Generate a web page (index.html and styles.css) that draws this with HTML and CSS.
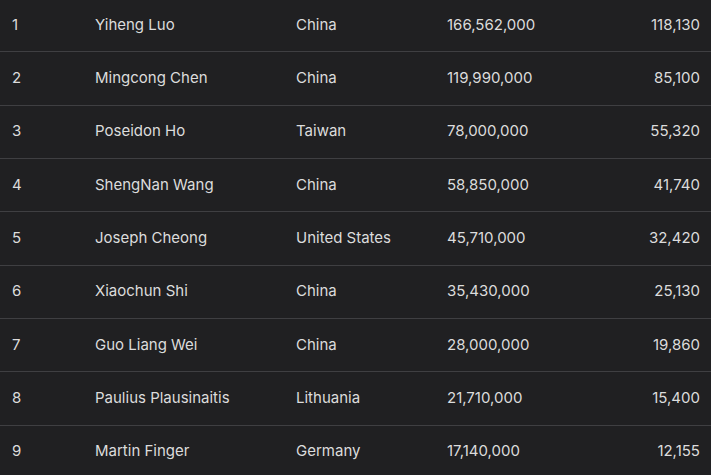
FILE: index.html
```html
<!DOCTYPE html>
<html>
<head>
<meta charset="utf-8">
<link rel="stylesheet" href="styles.css">
</head>
<body>
<div class="table">
  <div class="row"><span>1</span><span>Yiheng Luo</span><span>China</span><span>166,562,000</span><span class="num">118,130</span></div>
  <div class="row"><span>2</span><span>Mingcong Chen</span><span>China</span><span>119,990,000</span><span class="num">85,100</span></div>
  <div class="row"><span>3</span><span>Poseidon Ho</span><span>Taiwan</span><span>78,000,000</span><span class="num">55,320</span></div>
  <div class="row"><span>4</span><span>ShengNan Wang</span><span>China</span><span>58,850,000</span><span class="num">41,740</span></div>
  <div class="row"><span>5</span><span>Joseph Cheong</span><span>United States</span><span>45,710,000</span><span class="num">32,420</span></div>
  <div class="row"><span>6</span><span>Xiaochun Shi</span><span>China</span><span>35,430,000</span><span class="num">25,130</span></div>
  <div class="row"><span>7</span><span>Guo Liang Wei</span><span>China</span><span>28,000,000</span><span class="num">19,860</span></div>
  <div class="row"><span>8</span><span>Paulius Plausinaitis</span><span>Lithuania</span><span>21,710,000</span><span class="num">15,400</span></div>
  <div class="row"><span>9</span><span>Martin Finger</span><span>Germany</span><span>17,140,000</span><span class="num">12,155</span></div>
</div>
</body>
</html>
```
FILE: styles.css
```css
html, body {
  margin: 0;
  padding: 0;
  background: #202022;
  overflow: hidden;
}
.table {
  margin-top: -1px;
  width: 711px;
  font-family: Inter, "Noto Sans", sans-serif;
  font-size: 15px;
  color: #dcdcdc;
}
.row {
  display: grid;
  grid-template-columns: 83px 201px 151px 1fr auto;
  align-items: center;
  height: 50.33px;
  padding: 0 11px 2px 12px;
  border-bottom: 1px solid #3f3f42;
  box-sizing: content-box;
}
.num {
  text-align: right;
}
```
